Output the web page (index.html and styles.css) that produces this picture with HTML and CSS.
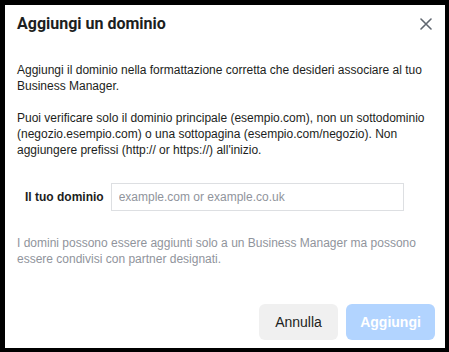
FILE: index.html
```html
<!DOCTYPE html>
<html>
<head>
    <title>Aggiungi un dominio</title>
    <link rel="stylesheet" href="styles.css">
</head>
<body>
    <div class="dialog">
        <div class="header">
            <h2 class="title">Aggiungi un dominio</h2>
            <button class="close" aria-label="Chiudi">
                <svg width="12" height="12" viewBox="0 0 12 12">
                    <path d="M1 1 L11 11 M11 1 L1 11" stroke="#606770" stroke-width="1.6" stroke-linecap="round"/>
                </svg>
            </button>
        </div>

        <div class="content">
            <p>Aggiungi il dominio nella formattazione corretta che desideri associare al tuo Business Manager.</p>
            <p>Puoi verificare solo il dominio principale (esempio.com), non un sottodominio (negozio.esempio.com) o una sottopagina (esempio.com/negozio). Non aggiungere prefissi (http:// or https://) all'inizio.</p>

            <div class="field">
                <label for="domain">Il tuo dominio</label>
                <input type="text" id="domain" placeholder="example.com or example.co.uk">
            </div>

            <p class="note">I domini possono essere aggiunti solo a un Business Manager ma possono essere condivisi con partner designati.</p>
        </div>

        <div class="footer">
            <button class="btn btn-cancel">Annulla</button>
            <button class="btn btn-add" disabled>Aggiungi</button>
        </div>
    </div>
</body>
</html>
```

FILE: styles.css
```css
body {
    margin: 0;
    padding: 5px 4px 4px 5px;
    background: #000;
    font-family: "Liberation Sans", Arial, sans-serif;
    height: 352px;
    box-sizing: border-box;
}

.dialog {
    background: #fff;
    height: 343px;
    display: flex;
    flex-direction: column;
}

.header {
    display: flex;
    justify-content: space-between;
    align-items: center;
    padding: 8px 13px 0 12px;
    height: 22px;
}

.title {
    margin: 0;
    font-family: Roboto, "Liberation Sans", Arial, sans-serif;
    font-size: 16px;
    line-height: 20px;
    font-weight: bold;
    color: #1c1e21;
}

.close {
    border: none;
    background: none;
    padding: 0;
    width: 12px;
    height: 12px;
    cursor: pointer;
    display: flex;
}

.content {
    padding: 27px 10px 0 12px;
    font-size: 12px;
    line-height: 16px;
    color: #1c1e21;
}

.content p {
    margin: 0 0 16px;
}

.field {
    display: flex;
    align-items: center;
    gap: 7px;
    padding-left: 8px;
    margin-top: 25px;
}

.field label {
    font-weight: bold;
    color: #1c1e21;
}

.field input {
    width: 293px;
    height: 28px;
    box-sizing: border-box;
    border: 1px solid #dddfe2;
    padding: 0 7px;
    font-family: inherit;
    font-size: 12px;
    color: #1c1e21;
}

.field input::placeholder {
    color: #90949c;
}

.content .note {
    margin-top: 24px;
    color: #90949c;
}

.footer {
    margin-top: auto;
    display: flex;
    justify-content: flex-end;
    gap: 8px;
    padding: 0 10px 8px 0;
}

.btn {
    height: 36px;
    border: none;
    border-radius: 6px;
    font-family: inherit;
    font-size: 14px;
    padding: 0 12px;
}

.btn-cancel {
    width: 79px;
    background: #f0f0f0;
    color: #1c1e21;
}

.btn-add {
    width: 89px;
    background: #b2d4ff;
    color: #fff;
    font-weight: bold;
}
```
